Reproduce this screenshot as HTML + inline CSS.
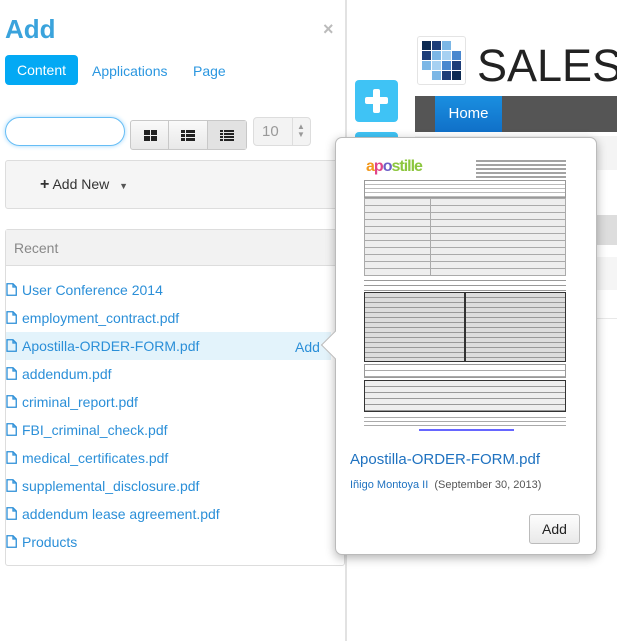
<!DOCTYPE html>
<html><head><meta charset="utf-8"><style>
*{box-sizing:border-box;margin:0;padding:0}
html,body{width:617px;height:641px;overflow:hidden}
body{background:#fff;font-family:"Liberation Sans",sans-serif;position:relative}
#wrap{position:absolute;left:0;top:0;width:617px;height:641px;overflow:hidden}
.a{position:absolute}
.lnk{color:#2b97e0;font-size:14px}
.item{position:absolute;left:5px;width:330px;height:28px;line-height:28px;color:#2b8fd8;font-size:14px;padding-left:17px}
.item svg{position:absolute;left:1px;top:7px}
</style></head><body><div id="wrap">
<div class="a" style="left:345px;top:0;width:2px;height:641px;background:#e2e2e2"></div>
<div class="a" style="left:417px;top:36px;width:49px;height:49px;border:1px solid #e4e4e4;border-radius:3px;background:#fff">
<svg width="40" height="40" viewBox="0 0 40 40" style="position:absolute;left:4px;top:4px">
<rect x="0" y="0" width="9" height="9" fill="#0d2a52"/><rect x="10" y="0" width="9" height="9" fill="#1d3d78"/><rect x="20" y="0" width="9" height="9" fill="#7cb7e6"/>
<rect x="0" y="10" width="9" height="9" fill="#1d3d78"/><rect x="10" y="10" width="9" height="9" fill="#7cb7e6"/><rect x="20" y="10" width="9" height="9" fill="#a7d1f2"/><rect x="30" y="10" width="9" height="9" fill="#4a88cf"/>
<rect x="0" y="20" width="9" height="9" fill="#7cb7e6"/><rect x="10" y="20" width="9" height="9" fill="#a7d1f2"/><rect x="20" y="20" width="9" height="9" fill="#4a88cf"/><rect x="30" y="20" width="9" height="9" fill="#1d3d78"/>
<rect x="10" y="30" width="9" height="9" fill="#7cb7e6"/><rect x="20" y="30" width="9" height="9" fill="#1d3d78"/><rect x="30" y="30" width="9" height="9" fill="#0d2a52"/></svg></div>
<div class="a" style="left:477px;top:40px;width:140px;overflow:hidden;font-size:45px;color:#222;white-space:nowrap">SALES D</div>
<div class="a" style="left:415px;top:96px;width:202px;height:36px;background:#555"></div>
<div class="a" style="left:435px;top:96px;width:67px;height:36px;background:linear-gradient(#1a8fe0,#1070c8);color:#fff;font-size:15px;line-height:36px;text-align:center">Home</div>
<div class="a" style="left:415px;top:136px;width:202px;height:34px;background:#f4f4f4"></div>
<div class="a" style="left:415px;top:215px;width:202px;height:30px;background:#ddd"></div>
<div class="a" style="left:415px;top:257px;width:202px;height:33px;background:#f5f5f5"></div>
<div class="a" style="left:415px;top:318px;width:202px;height:1px;background:#e8e8e8"></div>
<div class="a" style="left:355px;top:80px;width:43px;height:42px;background:#3fc3f5;border-radius:4px"></div>
<div class="a" style="left:373px;top:89px;width:7px;height:24px;background:#fff;border-radius:2px"></div>
<div class="a" style="left:365px;top:97px;width:23px;height:7px;background:#fff;border-radius:2px"></div>
<div class="a" style="left:355px;top:132px;width:43px;height:20px;background:#3fc3f5;border-radius:4px"></div>

<div class="a" style="left:5px;top:14px;font-size:26px;font-weight:bold;color:#3aa3dc">Add</div>
<div class="a" style="left:323px;top:19px;font-size:18px;color:#bbb;font-weight:bold">×</div>
<div class="a" style="left:5px;top:55px;width:73px;height:30px;background:#03a9f4;border-radius:4px;color:#fff;font-size:14px;line-height:30px;text-align:center">Content</div>
<div class="a lnk" style="left:92px;top:63px">Applications</div>
<div class="a lnk" style="left:193px;top:63px">Page</div>
<div class="a" style="left:5px;top:117px;width:120px;height:29px;border:1px solid #66bdf5;border-radius:15px;box-shadow:0 0 5px #9dd6fb"></div>
<div class="a" style="left:130px;top:120px;width:117px;height:30px;border:1px solid #c8c8c8;border-radius:3px;background:linear-gradient(#fafafa,#e8e8e8);display:flex">
<div style="width:39px;border-right:1px solid #c8c8c8;position:relative"><svg width="13" height="11" style="position:absolute;left:13px;top:9px"><rect x="0" y="0" width="6" height="5" fill="#222"/><rect x="7" y="0" width="6" height="5" fill="#222"/><rect x="0" y="6" width="6" height="5" fill="#222"/><rect x="7" y="6" width="6" height="5" fill="#222"/></svg></div>
<div style="width:39px;border-right:1px solid #c8c8c8;position:relative"><svg width="14" height="11" style="position:absolute;left:12px;top:9px"><rect x="0" y="0" width="4" height="3" fill="#222"/><rect x="5" y="0" width="9" height="3" fill="#222"/><rect x="0" y="4" width="4" height="3" fill="#222"/><rect x="5" y="4" width="9" height="3" fill="#222"/><rect x="0" y="8" width="4" height="3" fill="#222"/><rect x="5" y="8" width="9" height="3" fill="#222"/></svg></div>
<div style="width:39px;position:relative;background:#e2e2e2"><svg width="14" height="11" style="position:absolute;left:12px;top:9px"><rect x="0" y="0" width="3" height="2" fill="#222"/><rect x="4" y="0" width="10" height="2" fill="#222"/><rect x="0" y="3" width="3" height="2" fill="#222"/><rect x="4" y="3" width="10" height="2" fill="#222"/><rect x="0" y="6" width="3" height="2" fill="#222"/><rect x="4" y="6" width="10" height="2" fill="#222"/><rect x="0" y="9" width="3" height="2" fill="#222"/><rect x="4" y="9" width="10" height="2" fill="#222"/></svg></div></div>
<div class="a" style="left:253px;top:117px;width:58px;height:29px;border:1px solid #ddd;border-radius:4px;background:#f3f3f3;color:#999;font-size:15px;line-height:27px;padding-left:8px">10
<div style="position:absolute;left:38px;top:0;width:1px;height:27px;background:#ddd"></div>
<div style="position:absolute;left:43px;top:5px;font-size:8px;line-height:8px;color:#999">▲<br>▼</div></div>
<div class="a" style="left:5px;top:160px;width:340px;height:49px;background:#f5f5f5;border:1px solid #ddd;border-radius:3px"></div>
<div class="a" style="left:40px;top:176px;font-size:14px;color:#333"><b style="font-size:16px">+</b> Add New <span style="font-size:9px;margin-left:6px;color:#555">▼</span></div>
<div class="a" style="left:5px;top:229px;width:340px;height:337px;border:1px solid #ddd;border-radius:3px"></div>
<div class="a" style="left:6px;top:230px;width:338px;height:36px;background:#f2f2f2;border-bottom:1px solid #ddd;color:#888;font-size:14px;line-height:36px;padding-left:8px">Recent</div>
<div class="a" style="left:6px;top:332px;width:325px;height:28px;background:#e3f3fb"></div>
<div class="a" style="left:295px;top:339px;color:#2b8fd8;font-size:14px">Add</div>

<div class="a" style="left:335px;top:137px;width:262px;height:418px;background:#fff;border:1px solid #bbb;border-radius:7px;box-shadow:0 3px 10px rgba(0,0,0,.3)"></div>
<div class="a" style="left:325px;top:335px;width:20px;height:20px;background:#fff;transform:rotate(45deg);border-left:1px solid #bbb;border-bottom:1px solid #bbb"></div>
<div class="a" style="left:364px;top:152px;width:202px;height:280px;font-size:3px;color:#555">
<div class="a" style="left:2px;top:6px;font-size:16px;font-weight:bold;letter-spacing:-1px;color:#8cc63e"><span style="color:#f39a1f">a</span><span style="color:#e0448a">p</span><span style="color:#6c5fc7">o</span>stille</div>
<div class="a" style="right:0;top:6px;width:90px;height:22px;background:repeating-linear-gradient(#fff 0 2px,#666 2px 4px);opacity:.6"></div>
<div class="a" style="left:0;top:28px;width:202px;height:18px;border:1px solid #999;background:repeating-linear-gradient(#fff 0 3px,#bbb 3px 4px)"></div>
<div class="a" style="left:0;top:46px;width:202px;height:78px;border:1px solid #aaa;background:repeating-linear-gradient(#eee 0 6px,#aaa 6px 7px)"></div>
<div class="a" style="left:66px;top:46px;width:1px;height:78px;background:#aaa"></div>
<div class="a" style="left:0;top:124px;width:202px;height:16px;background:repeating-linear-gradient(#fff 0 4px,#999 4px 5px)"></div>
<div class="a" style="left:0;top:140px;width:202px;height:70px;border:1.5px solid #333;background:repeating-linear-gradient(#ddd 0 4px,#999 4px 5px)"></div>
<div class="a" style="left:100px;top:140px;width:1.5px;height:70px;background:#333"></div>
<div class="a" style="left:0;top:212px;width:202px;height:14px;border:1px solid #999;background:repeating-linear-gradient(#fff 0 5px,#aaa 5px 6px)"></div>
<div class="a" style="left:0;top:228px;width:202px;height:32px;border:1.5px solid #333;background:repeating-linear-gradient(#eee 0 5px,#999 5px 6px)"></div>
<div class="a" style="left:0;top:262px;width:202px;height:14px;background:repeating-linear-gradient(#fff 0 3px,#aaa 3px 4px)"></div>
<div class="a" style="left:55px;top:277px;width:95px;height:2px;background:#66f"></div>
</div>
<div class="a" style="left:350px;top:451px;font-size:15px;color:#1f72c0">Apostilla-ORDER-FORM.pdf</div>
<div class="a" style="left:350px;top:479px;font-size:11px;color:#555"><span style="color:#1f72c0">Iñigo Montoya II</span>&nbsp; (September 30, 2013)</div>
<div class="a" style="left:529px;top:514px;width:51px;height:30px;border:1px solid #bbb;border-radius:3px;background:linear-gradient(#fdfdfd,#e9e9e9);font-size:14px;line-height:28px;text-align:center;color:#222">Add</div>

<div id="list"></div>
</div>
<script>
var n=["User Conference 2014","employment_contract.pdf","Apostilla-ORDER-FORM.pdf","addendum.pdf","criminal_report.pdf","FBI_criminal_check.pdf","medical_certificates.pdf","supplemental_disclosure.pdf","addendum lease agreement.pdf","Products"];
var h="";n.forEach(function(t,i){h+='<div class="item" style="top:'+(276+i*28)+'px"><svg width="11" height="13" viewBox="0 0 11 13"><path d="M1 .75H7L10.25 4V12.25H1Z M7 .75V4H10.25" fill="none" stroke="#2b8fd8" stroke-width="1.3"/></svg>'+t+'</div>'});
document.getElementById("list").innerHTML=h;
</script>
</body></html>
